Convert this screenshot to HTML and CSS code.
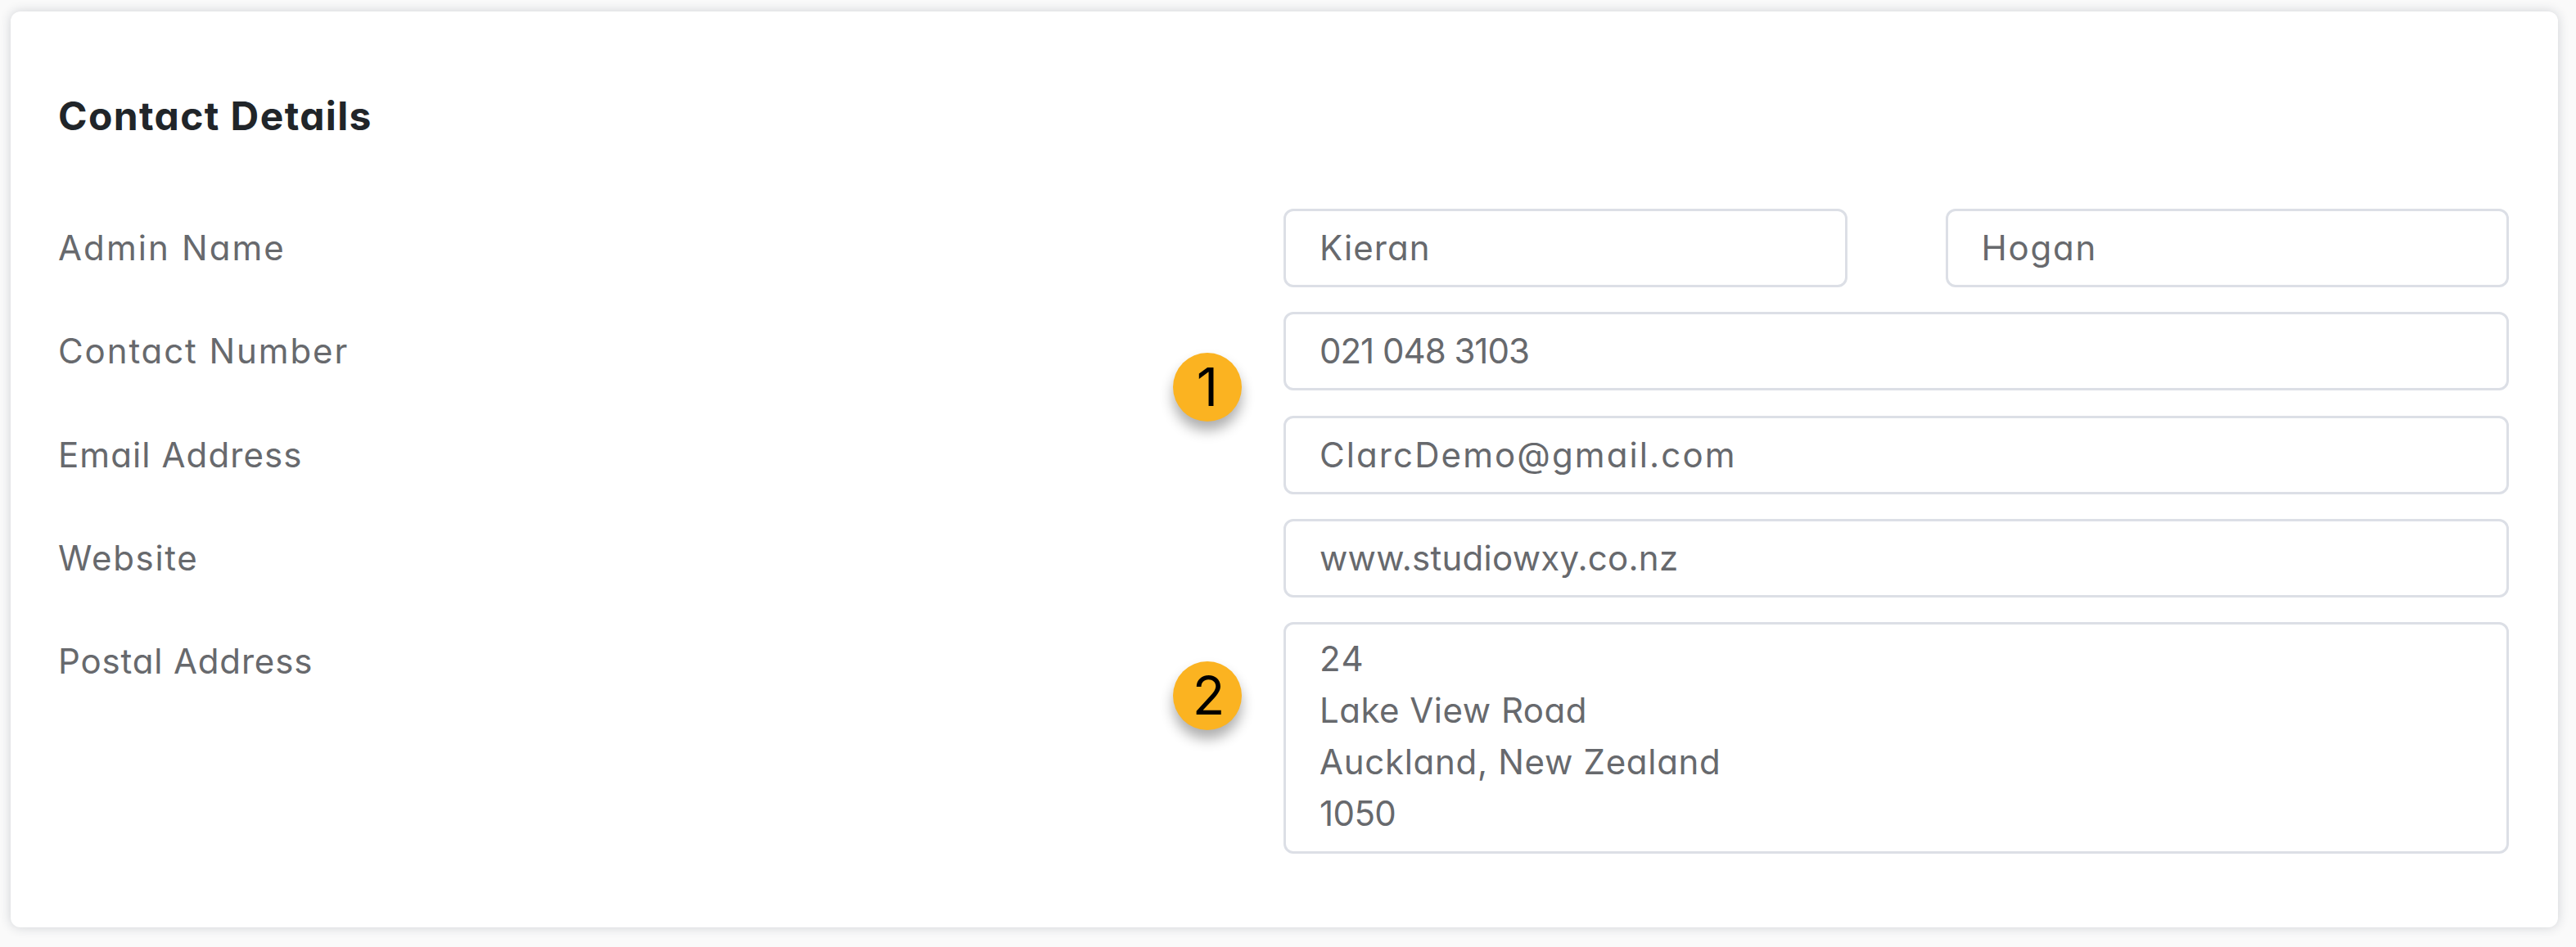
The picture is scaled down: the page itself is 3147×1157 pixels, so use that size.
FILE: index.html
```html
<!DOCTYPE html>
<html lang="en">
<head>
  <meta charset="UTF-8" />
  <title>Contact Details</title>
  <meta name="viewport" content="width=device-width, initial-scale=1.0" />
  <link rel="stylesheet" href="styles.css">
</head>
<body>
  <div class="card">
    <h2>Contact Details</h2>

    <div class="details">
      <div class="label admin-label">Admin Name</div>
      <div class="name-fields">
        <div class="field first-name">Kieran</div>
        <div class="field last-name">Hogan</div>
      </div>

      <div class="label number-label">Contact Number</div>
      <div class="field number">021 048 3103</div>

      <div class="label email-label">Email Address</div>
      <div class="field email">ClarcDemo@gmail.com</div>

      <div class="label website-label">Website</div>
      <div class="field website">www.studiowxy.co.nz</div>

      <div class="label address-label">Postal Address</div>
      <div class="field address">
        <div class="house">24</div>
        <div class="road">Lake View Road</div>
        <div class="city">Auckland, New Zealand</div>
        <div class="postcode">1050</div>
      </div>
    </div>

    <div class="badge badge-contact">1</div>
    <div class="badge badge-address">2</div>
  </div>
</body>
</html>
```
FILE: styles.css
```css
* { box-sizing: border-box; }
body {
  margin: 0;
  padding: 14px 22px 24px 13px;
  background: #fafafa;
  color: #67696d;
  font-family: Inter, "Open Sans", sans-serif;
  font-size: 42px;
  line-height: 63px;
  /* single-storey a */
  font-feature-settings: "cv11";
}
.card {
  position: relative;
  height: 1119px;
  padding: 92px 60px 0 58px;
  background: #fff;
  border-radius: 12px;
  box-shadow: 0 0 14px rgba(35, 45, 65, 0.2);
}
h2 {
  margin: 0 0 77px;
  color: #212529;
  font-size: 48px;
  line-height: 72px;
  font-weight: 700;
  letter-spacing: 1.4px;
}
.details {
  display: grid;
  grid-template-columns: 1fr 1fr;
  row-gap: 30.25px;
}
.label { padding-top: 16px; }
.name-fields {
  display: grid;
  grid-template-columns: 1fr 1fr;
  gap: 120px;
}
.field {
  height: 96px;
  padding: 13px 41px;
  border: 3px solid #dcdfe6;
  border-radius: 12px;
  white-space: nowrap;
}
.address {
  height: 283px;
  padding-top: 10px;
}

/* Letter spacing */
.admin-label { letter-spacing: 2.1px; }
.number-label { letter-spacing: 1.9px; }
.email-label { letter-spacing: 1.1px; }
.website-label { letter-spacing: 1.7px; }
.address-label { letter-spacing: 0.85px; }
.first-name { letter-spacing: 1.1px; }
.last-name { letter-spacing: 1.8px; }
.number { letter-spacing: -1px; }
.email { letter-spacing: 2.1px; }
.website { letter-spacing: 0.25px; }
.house { letter-spacing: 1.5px; }
.road { letter-spacing: 0.5px; }
.city { letter-spacing: 0.7px; }
.postcode { letter-spacing: -0.6px; }

/* Numbered markers over the form */
.badge {
  position: absolute;
  left: 1420px;
  width: 84px;
  height: 84px;
  padding-left: 3px;
  border-radius: 50%;
  background: #fbb321;
  color: #000;
  font-size: 65px;
  line-height: 84px;
  text-align: center;
  box-shadow: 0 11px 16px rgba(0, 0, 0, 0.32);
}
.badge-contact {
  top: 417px;
  padding-left: 0;
}
.badge-address { top: 794px; }
```
